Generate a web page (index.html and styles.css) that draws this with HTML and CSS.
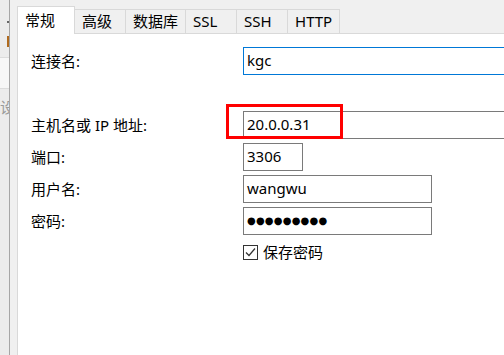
FILE: index.html
```html
<!DOCTYPE html>
<html lang="zh-CN">
<head>
<meta charset="UTF-8">
<meta name="viewport" content="width=device-width, initial-scale=1.0">
<title>连接设置</title>
<link rel="stylesheet" href="styles.css">
</head>
<body>
  <div class="sidebar">
    <div class="side-top">
      <span class="side-dot"></span>
      <span class="side-icon"></span>
    </div>
    <div class="side-mid"></div>
    <div class="side-bottom"><span class="side-text">设</span></div>
  </div>
  <div class="gutter"></div>
  <div class="dialog">
    <div class="tabs">
      <div class="tab active">常规</div>
      <div class="tab">高级</div>
      <div class="tab">数据库</div>
      <div class="tab">SSL</div>
      <div class="tab">SSH</div>
      <div class="tab">HTTP</div>
    </div>
    <div class="panel">
      <div class="row row-first">
        <label class="label">连接名:</label>
        <div class="field field-wide focused">kgc</div>
      </div>
      <div class="row">
        <label class="label">主机名或 IP 地址:</label>
        <div class="field field-wide">20.0.0.31<span class="highlight"></span></div>
      </div>
      <div class="row">
        <label class="label">端口:</label>
        <div class="field field-port">3306</div>
      </div>
      <div class="row">
        <label class="label">用户名:</label>
        <div class="field field-mid">wangwu</div>
      </div>
      <div class="row row-pass">
        <label class="label">密码:</label>
        <div class="field field-mid dots">●●●●●●●●●</div>
      </div>
      <div class="row-check">
        <span class="checkbox">
          <svg width="13" height="13" viewBox="0 0 13 13"><path d="M2 6.5 L5 9.5 L11 2.5" fill="none" stroke="#333" stroke-width="1.2"/></svg>
        </span>
        <span class="check-label">保存密码</span>
      </div>
    </div>
  </div>
</body>
</html>
```

FILE: styles.css
```css
body {
  margin: 0;
  padding: 0;
  width: 504px;
  height: 355px;
  overflow: hidden;
  display: flex;
  font-family: "Noto Sans", "Noto Sans CJK SC", sans-serif;
  font-size: 15px;
  color: #000;
  background: #fff;
}

.sidebar {
  width: 9px;
  flex-shrink: 0;
  display: flex;
  flex-direction: column;
  background: #ececec;
  border-right: 1px solid #a6a6a6;
  overflow: hidden;
}

.side-top {
  height: 57px;
  position: relative;
  border-bottom: 1px solid #dcdcdc;
}

.side-dot {
  position: absolute;
  left: 7px;
  top: 21px;
  width: 2px;
  height: 2px;
  background: #666;
}

.side-icon {
  position: absolute;
  left: 7px;
  top: 36px;
  width: 2px;
  height: 11px;
  background: #b06a1e;
}

.side-mid {
  height: 30px;
  background: #f7f7f7;
  border-bottom: 1px solid #dcdcdc;
}

.side-bottom {
  flex: 1;
  display: flex;
  justify-content: flex-end;
  padding-top: 8px;
}

.side-text {
  color: #9a9a9a;
  font-size: 15px;
  margin-right: -6px;
  line-height: 20px;
  height: 20px;
}

.gutter {
  width: 7px;
  flex-shrink: 0;
  background: #f0f0f0;
}

.dialog {
  flex: 1;
  display: flex;
  flex-direction: column;
  min-width: 0;
}

.tabs {
  height: 34px;
  flex-shrink: 0;
  display: flex;
  align-items: flex-end;
  background: #f0f0f0;
  border-bottom: 1px solid #d9d9d9;
  box-sizing: border-box;
}

.tab {
  height: 24px;
  min-width: 52px;
  padding: 0 7px;
  box-sizing: border-box;
  border: 1px solid #d9d9d9;
  border-bottom: none;
  margin-left: -1px;
  background: #f0f0f0;
  line-height: 23px;
  color: #000;
  position: relative;
  top: 0;
}

.tab.active {
  height: 28px;
  width: 58px;
  margin-left: 0;
  margin-right: 0;
  padding: 0 7px;
  background: #fff;
  line-height: 26px;
  margin-bottom: -1px;
  z-index: 1;
}

.tab.active + .tab {
  margin-left: -1px;
}

.panel {
  flex: 1;
  border-left: 1px solid #d9d9d9;
  padding: 13px 0 0 13px;
  display: flex;
  flex-direction: column;
  overflow: hidden;
}

.row {
  display: flex;
  align-items: center;
  height: 28px;
  margin-bottom: 4px;
  flex-shrink: 0;
}

.row-first {
  margin-bottom: 36px;
}

.row-pass {
  margin-bottom: 9px;
}

.label {
  width: 212px;
  flex-shrink: 0;
  line-height: 20px;
}

.field {
  position: relative;
  height: 28px;
  box-sizing: border-box;
  border: 1px solid #7a7a7a;
  padding: 0 3px;
  line-height: 25px;
  flex-shrink: 0;
  white-space: nowrap;
}

.field.focused {
  border-color: #0078d7;
}

.field-wide {
  width: 300px;
}

.field-port {
  width: 60px;
}

.field-mid {
  width: 189px;
}

.dots {
  font-family: "DejaVu Sans", sans-serif;
  font-size: 10px;
  letter-spacing: 0.2px;
  padding-left: 3px;
}

/* red annotation around the host address */
.highlight {
  position: absolute;
  left: -18px;
  top: -8px;
  width: 117px;
  height: 35px;
  box-sizing: border-box;
  border: 3px solid #ff0000;
}

.row-check {
  display: flex;
  align-items: center;
  margin-left: 212px;
  height: 16px;
}

.checkbox {
  width: 15px;
  height: 15px;
  box-sizing: border-box;
  border: 1px solid #333;
  display: flex;
  align-items: center;
  justify-content: center;
  margin-right: 5px;
}

.check-label {
  line-height: 20px;
}
```
